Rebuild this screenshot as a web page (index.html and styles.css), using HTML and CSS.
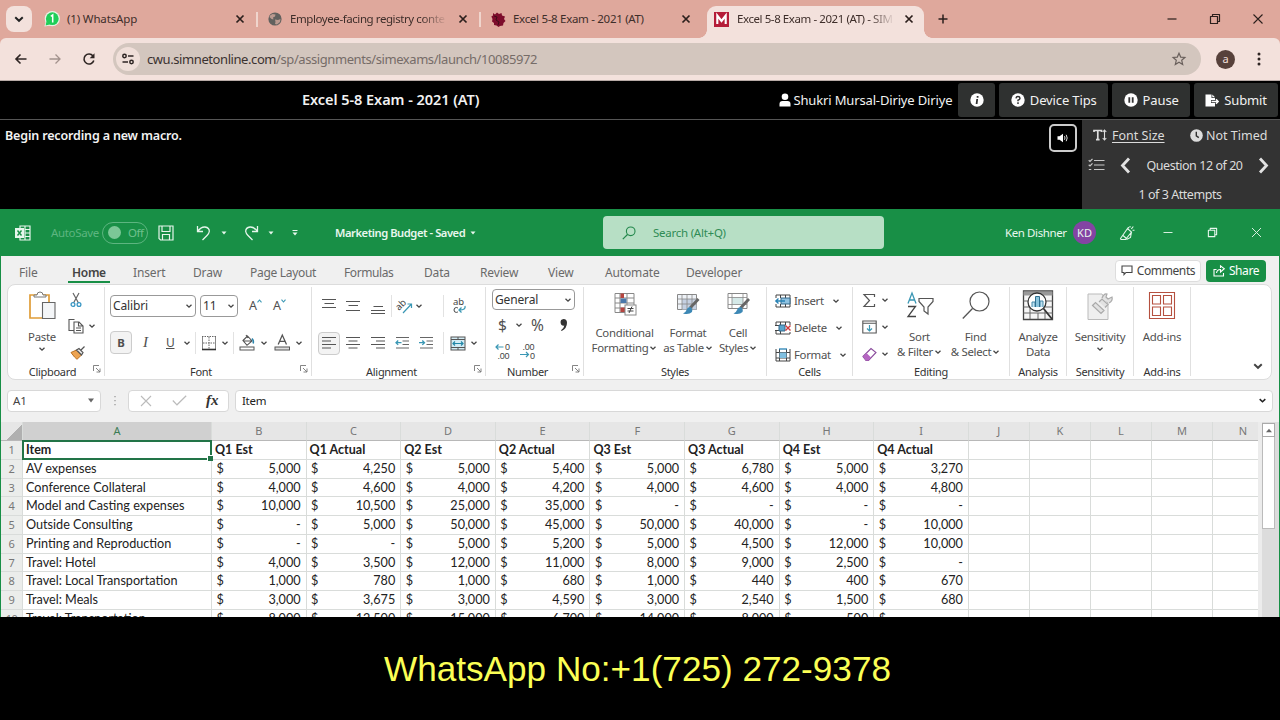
FILE: index.html
```html
<!DOCTYPE html>
<html lang="en">
<head>
<meta charset="utf-8">
<title>Excel 5-8 Exam - 2021 (AT)</title>
<link rel="stylesheet" href="styles.css">
</head>
<body>
<svg class="defs" width="0" height="0">
  <symbol id="chev" viewBox="0 0 8 8"><path d="M1.500 2.800 4 5.200 6.500 2.800" fill="none" stroke="currentColor" stroke-width="1.300"/></symbol>
  <symbol id="close" viewBox="0 0 10 10"><path d="M1.500 1.500l7 7m0-7l-7 7" fill="none" stroke="currentColor" stroke-width="1.700"/></symbol>
  <symbol id="launch" viewBox="0 0 8 8"><path d="M.5 6V.5H6M3 3l4 4M7 3.500V7H3.500" fill="none" stroke="currentColor" stroke-width=".9"/></symbol>
  <symbol id="restore" viewBox="0 0 12 12"><path d="M1.500 3.500h7v7h-7zM3.500 3.500v-2h7v7h-2" fill="none" stroke="currentColor" stroke-width="1.200" stroke-linejoin="round"/></symbol>
</svg>

<header class="tabs">
  <button class="tab-search"><svg width="12" height="12"><use href="#chev"/></svg></button>
  <div class="tab t1">
    <svg width="16" height="16" viewBox="0 0 16 16"><circle cx="8.300" cy="7.700" r="7.600" fill="#e9f3e6"/><path d="M.4 15.600 2 10.500l4 4z" fill="#e9f3e6"/><circle cx="8.300" cy="7.700" r="6.400" fill="#1fce58"/><path d="M1.600 14.400 2.600 10l3 3.400z" fill="#1fce58"/><path d="M6.800 5.300 8.700 4v7.500" fill="none" stroke="#fff" stroke-width="1.500"/></svg>
    <span>(1) WhatsApp</span><svg class="x" width="10" height="10"><use href="#close"/></svg>
  </div>
  <div class="tab t2">
    <svg width="14" height="14" viewBox="0 0 14 14"><circle cx="7" cy="7" r="6.600" fill="#62615e"/><path d="M2 3.500 4.500 2l3 .5-.5 2-2 1 .5 2-2-.5-2-2zM7 7.500l3 .5 2.500-1-.5 3-3 2.500-2-.5.5-2z" fill="#bb9a90"/></svg>
    <span class="fade">Employee-facing registry conte</span><svg class="x" width="10" height="10"><use href="#close"/></svg>
  </div>
  <div class="tab t3">
    <svg width="15" height="15" viewBox="0 0 15 15"><path d="M2 1l2 1.500L6 .5l2 1.500 2.500-1 .5 2.500 3 1-1 2.500 1.500 2-2 2-.5 2.500-3 .5-1.500 1-2-1.500-2.500-.5L3 11 1 9.500 1.500 7 .3 4.500 2 3.500z" fill="#7d0c2b"/><path d="M3 4l3 1-1 3 3 2-1 3" fill="none" stroke="#3e0d18"/></svg>
    <span>Excel 5-8 Exam - 2021 (AT)</span><svg class="x" width="10" height="10"><use href="#close"/></svg>
  </div>
  <div class="tab t4">
    <svg width="15" height="15" viewBox="0 0 15 15"><rect width="15" height="15" fill="#b51c38"/><path d="M3.300 12V3.500L7.500 9l4.200-5.500V12" fill="none" stroke="#fff" stroke-width="2.100"/></svg>
    <span class="fade">Excel 5-8 Exam - 2021 (AT) - SIM</span><svg class="x" width="10" height="10"><use href="#close"/></svg>
  </div>
  <svg class="plus" width="12" height="12" viewBox="0 0 12 12"><path d="M6 1.500v9M1.500 6h9" stroke="#2b1f1c" stroke-width="1.500"/></svg>
  <div class="win">
    <svg width="12" height="12" viewBox="0 0 12 12"><path d="M1.500 6h9" stroke="#2b1f1c" stroke-width="1.200"/></svg>
    <svg width="12" height="12"><use href="#restore"/></svg>
    <svg width="12" height="12" viewBox="0 0 12 12"><path d="M1.500 1.500l9 9m0-9l-9 9" stroke="#2b1f1c" stroke-width="1.100"/></svg>
  </div>
</header>

<nav class="toolbar">
  <div class="navs">
    <svg width="14" height="12" viewBox="0 0 14 12"><path d="M12.500 6H2M6.500 1.500 2 6l4.500 4.500" fill="none" stroke="#2e2523" stroke-width="1.600"/></svg>
    <svg width="14" height="12" viewBox="0 0 14 12"><path d="M1.500 6H12M7.500 1.500 12 6l-4.500 4.500" fill="none" stroke="#a3928d" stroke-width="1.300"/></svg>
    <svg width="14" height="14" viewBox="0 0 14 14"><path d="M11.800 8.500A5 5 0 1 1 11 4" fill="none" stroke="#2e2523" stroke-width="1.600"/><path d="M12.500 1.200v5H7.700z" fill="#2e2523"/></svg>
  </div>
  <div class="omni">
    <span class="site"><svg width="14" height="12" viewBox="0 0 14 12"><g fill="none" stroke="#2e2523" stroke-width="1.500"><circle cx="3.500" cy="3" r="1.700"/><path d="M7 3h5.500M1.500 9H7"/><circle cx="10.500" cy="9" r="1.700"/></g></svg></span>
    <span class="url">cwu.simnetonline.com<i>/sp/assignments/simexams/launch/10085972</i></span>
    <svg class="star" width="14" height="14" viewBox="0 0 14 14"><path d="M7 1.200l1.700 3.900 4.200.4-3.200 2.800 1 4.200L7 10.300l-3.700 2.200 1-4.200L1.100 5.500l4.200-.4z" fill="none" stroke="#6a605c" stroke-width="1.200"/></svg>
  </div>
  <span class="avatar">a</span>
  <svg width="4" height="16" viewBox="0 0 4 16"><g fill="#2e2523"><circle cx="2" cy="3" r="1.500"/><circle cx="2" cy="8" r="1.500"/><circle cx="2" cy="13" r="1.500"/></g></svg>
</nav>

<section class="exam">
  <h1>Excel 5-8 Exam - 2021 (AT)</h1>
  <div class="user"><svg width="12" height="14" viewBox="0 0 12 14"><circle cx="6" cy="3.800" r="3.300" fill="#fff"/><path d="M.5 13.500V11q0-3 3-3h5q3 0 3 3v2.500z" fill="#fff"/></svg>Shukri Mursal-Diriye Diriye</div>
  <button class="eb e1"><svg width="14" height="14" viewBox="0 0 14 14"><circle cx="7" cy="7" r="6.700" fill="#fff"/><path d="M7.600 3v1.700M7.200 6l-.6 5" stroke="#333" stroke-width="1.800"/></svg></button>
  <button class="eb e2"><svg width="14" height="14" viewBox="0 0 14 14"><circle cx="7" cy="7" r="6.700" fill="#fff"/><path d="M5 5.300Q5.200 3.600 7 3.600T9 5.300Q9 6.500 7 7.300v.9M7 9.300V11" fill="none" stroke="#333" stroke-width="1.500"/></svg>Device Tips</button>
  <button class="eb e3"><svg width="14" height="14" viewBox="0 0 14 14"><circle cx="7" cy="7" r="6.700" fill="#fff"/><path d="M5.300 4.200v5.600M8.700 4.200v5.600" stroke="#333" stroke-width="1.800"/></svg>Pause</button>
  <button class="eb e4"><svg width="14" height="13" viewBox="0 0 14 13"><path d="M.5.500h6v3.500h3.500v2H6v3h4v3.500H.5zM7.300.5l2.700 2.700H7.300z" fill="#fff"/><path d="M6.500 7.500H13M11 5.200l2.200 2.300L11 9.800" fill="none" stroke="#fff" stroke-width="1.400"/></svg>Submit</button>
</section>

<section class="question">
  <p>Begin recording a new macro.</p>
  <button class="sound"><svg width="12" height="10" viewBox="0 0 12 10"><path d="M.5 3.300h2L6 .8v8.400L2.500 6.700h-2z" fill="#fff"/><path d="M7.500 3.200q1 1.800 0 3.600M9.200 1.800q2 3.200 0 6.400" fill="none" stroke="#ddd"/></svg></button>
  <aside>
    <div class="q1">
      <svg width="14" height="12" viewBox="0 0 14 12"><path d="M1 3V1.500h7.500V3M4.800 1.500v9M3 10.600h3.600" fill="none" stroke="#ddd" stroke-width="1.700"/><path d="M11.500 1v10M9.700 3l1.800-2 1.800 2M9.700 9l1.800 2 1.800-2" fill="none" stroke="#ddd" stroke-width="1.100"/></svg>
      <u>Font Size</u>
      <svg class="clock" width="13" height="13" viewBox="0 0 13 13"><circle cx="6.500" cy="6.500" r="6.300" fill="#ddd"/><path d="M6.300 2.800v4l2.500 1.800" fill="none" stroke="#333" stroke-width="1.400"/></svg>
      <span>Not Timed</span>
    </div>
    <div class="q2">
      <svg width="17" height="14" viewBox="0 0 17 14"><path d="M6 2.500h10.500M6 7h10.500M6 11.500h10.500M.7 2.300l1.300 1.200L4.500.8M.7 6.800 2 8l2.500-2.700M.8 11.500h2.500" fill="none" stroke="#c9c9c9" stroke-width="1.200"/></svg>
      <svg width="11" height="17" viewBox="0 0 11 17"><path d="M9 1.500 2.500 8.500 9 15.500" fill="none" stroke="#e2e2e2" stroke-width="2.800"/></svg>
      <span>Question 12 of 20</span>
      <svg width="11" height="17" viewBox="0 0 11 17"><path d="M2 1.500 8.500 8.500 2 15.500" fill="none" stroke="#e2e2e2" stroke-width="2.800"/></svg>
    </div>
    <div class="q3">1 of 3 Attempts</div>
  </aside>
</section>

<main class="excel">
  <div class="title">
    <svg width="16" height="16" viewBox="0 0 16 16"><path d="M5 3V1h10v14H5v-2M10 1v14M10 4.500h5M10 8h5M10 11.500h5" fill="none" stroke="#e6f6ec" stroke-width="1.200"/><rect x="0" y="3" width="9" height="10" fill="#e6f6ec"/><path d="M2.500 5.500l4 5m0-5l-4 5" stroke="#188f46" stroke-width="1.400"/></svg>
    <span class="auto">AutoSave</span>
    <span class="toggle"><i></i>Off</span>
    <svg width="16" height="16" viewBox="0 0 16 16"><path d="M1 1h14v14H2.500L1 13.500zM4 1v5.500h8V1M4.500 15v-5.500h7V15" fill="none" stroke="#e6f6ec" stroke-width="1.200"/></svg>
    <svg width="15" height="16" viewBox="0 0 15 16"><path d="M1.500 1v5.500H7M1.500 6.500Q5 1.700 9 2q4.500.6 4.300 4.500Q13 8.500 11 10.500L6.500 15" fill="none" stroke="#e6f6ec" stroke-width="1.300"/></svg>
    <svg width="6" height="4" viewBox="0 0 6 4"><path d="M.5.500h5L3 3.500z" fill="#e6f6ec"/></svg>
    <svg width="15" height="16" viewBox="0 0 15 16"><path d="M13.500 1v5.500H8M13.500 6.500Q10 1.700 6 2 1.500 2.600 1.700 6.500 2 8.500 4 10.500L8.500 15" fill="none" stroke="#e6f6ec" stroke-width="1.300"/></svg>
    <svg width="6" height="4" viewBox="0 0 6 4"><path d="M.5.500h5L3 3.500z" fill="#e6f6ec"/></svg>
    <svg width="6" height="6" viewBox="0 0 6 6"><path d="M.5 2.500h5L3 5.500zM.5 0h5v1h-5z" fill="#e6f6ec"/></svg>
    <b class="doc">Marketing Budget - Saved</b>
    <svg width="6" height="4" viewBox="0 0 6 4"><path d="M.5.500h5L3 3.500z" fill="#e6f6ec"/></svg>
    <div class="search"><svg width="14" height="14" viewBox="0 0 14 14"><circle cx="8.700" cy="5.300" r="4.300" fill="none" stroke="#22874b" stroke-width="1.100"/><path d="M5.500 8.500.8 13.200" stroke="#22874b" stroke-width="1.200"/></svg>Search (Alt+Q)</div>
    <span class="ken">Ken Dishner</span>
    <span class="kd">KD</span>
    <svg width="16" height="16" viewBox="0 0 16 16"><path d="M1.500 13.500 8.500 3.500l4 3.500-6 7.500H2zM4 10.500l3.500 3M8.500 3.500 10 2.300M12.500 7l-1 5.500-4 2M11 1v1.500M12.300 4l2-2.500M13.500 5.300h2" fill="none" stroke="#e6f6ec" stroke-width="1.100"/></svg>
    <svg width="10" height="10" viewBox="0 0 10 10"><path d="M.5 4.500h9" stroke="#d6efdf"/></svg>
    <svg class="wr" width="11" height="11"><use href="#restore"/></svg>
    <svg width="11" height="11" viewBox="0 0 11 11"><path d="M1 1l9 9m0-9l-9 9" stroke="#d6efdf"/></svg>
  </div>

  <div class="menu">
    <span>File</span><span class="on">Home</span><span>Insert</span><span>Draw</span><span>Page Layout</span><span>Formulas</span><span>Data</span><span>Review</span><span>View</span><span>Automate</span><span>Developer</span>
    <button class="cm"><svg width="12" height="11" viewBox="0 0 12 11"><path d="M1 1h10v6.500H5L3 9.700V7.500H1z" fill="none" stroke="#444" stroke-width="1.100"/></svg>Comments</button>
    <button class="sh"><svg width="12" height="12" viewBox="0 0 12 12"><path d="M3.500 4.500H1v6.500h9.500V8M3.500 8q.5-3.500 4-3.500V7L11.300 3.700 7.500.8V3" fill="none" stroke="#fff" stroke-width="1.100"/></svg>Share</button>
  </div>

  <div class="ribbon">
    <section class="g clip">
      <div class="body">
        <div class="big">
          <svg width="28" height="30" viewBox="0 0 28 30"><path d="M9 4H2v23h12M14 4h7v7" fill="none" stroke="#e09d38" stroke-width="1.700"/><path d="M6 6V4h3q0-3 3-3t3 3h3v2z" fill="#fff" stroke="#777"/><path d="M14.500 11.500H27v16H14.500z" fill="#f4f6f8" stroke="#666" stroke-width="1.100"/></svg>
          <span>Paste</span><svg class="ch"><use href="#chev"/></svg>
        </div>
        <div class="col3">
          <div><svg width="12" height="16" viewBox="0 0 12 16"><path d="M3 1l5.500 10M9 1 3.500 11" stroke="#666" stroke-width="1.200"/><circle cx="3" cy="12.500" r="1.900" fill="none" stroke="#3a97c4" stroke-width="1.300"/><circle cx="9" cy="12.500" r="1.900" fill="none" stroke="#3a97c4" stroke-width="1.300"/></svg></div>
          <div><svg width="16" height="16" viewBox="0 0 16 16"><path d="M6 12.500H1V1.500h5.500M6 4h5l4 4v7H6zM10.500 4.500V8H15M8 10h5M8 12.500h5" fill="none" stroke="#555" stroke-width="1.100"/></svg><svg class="ch"><use href="#chev"/></svg></div>
          <div><svg width="16" height="15" viewBox="0 0 16 15"><path d="M1 7.500 6.500 5l5 5L7 14.300 4.500 12z" fill="#eda452" stroke="#bb7222"/><path d="M6.500 5 9 3.500l4 4-1.500 2.500zM11 5l3.500-3.500" fill="#eee" stroke="#555" stroke-width="1.200"/></svg></div>
        </div>
      </div>
      <footer>Clipboard<svg><use href="#launch"/></svg></footer>
    </section>

    <section class="g font">
      <div class="body rows">
        <div class="r r1"><span class="sel w1">Calibri<svg class="ch"><use href="#chev"/></svg></span><span class="sel w2">11<svg class="ch"><use href="#chev"/></svg></span><span class="aa">A<svg width="5" height="4" viewBox="0 0 5 4"><path d="M.5 3.300 2.500 1l2 2.300" fill="none" stroke="#3a97b4" stroke-width="1.100"/></svg></span><span class="aa">A<svg width="5" height="4" viewBox="0 0 5 4"><path d="M.5.700 2.500 3l2-2.300" fill="none" stroke="#3a97b4" stroke-width="1.100"/></svg></span></div>
        <div class="r r2"><b class="box">B</b><em>I</em><u>U</u><svg class="ch"><use href="#chev"/></svg><hr>
          <svg width="16" height="16" viewBox="0 0 16 16"><path d="M1.500 1v13.500M14.500 1v13.500" stroke="#888" stroke-width="1"/><path d="M1 1.500h14M8 2v12M2 8h12" stroke="#666" stroke-dasharray="1.500 1"/><path d="M1 14.500h14" stroke="#333" stroke-width="1.600"/></svg><svg class="ch"><use href="#chev"/></svg><hr>
          <svg width="17" height="17" viewBox="0 0 17 17"><path d="M4 6.500 8.500 2l4.500 5-5 4.300zM7 1l2 3M4.500 7h8" fill="none" stroke="#555" stroke-width="1.100"/><path d="M13 4.500q2 2 1.200 5" fill="none" stroke="#2d86ad" stroke-width="1.500"/><rect x="1" y="13" width="14" height="3" fill="#fff" stroke="#555"/></svg><svg class="ch"><use href="#chev"/></svg>
          <svg width="17" height="17" viewBox="0 0 17 17"><path d="M4.200 10.500 8.300 1l4.200 9.500M5.700 7.300h5.300" fill="none" stroke="#555" stroke-width="1.300"/><rect x="1" y="13" width="14.500" height="3" fill="#ddd" stroke="#555"/></svg><svg class="ch"><use href="#chev"/></svg></div>
      </div>
      <footer>Font<svg><use href="#launch"/></svg></footer>
    </section>

    <section class="g align">
      <div class="body rows">
        <div class="r a1">
          <svg width="20" height="20" viewBox="0 0 20 20"><path d="M4 3.500h14M6.500 7.500H16M4 11.500h14" stroke="#555" stroke-width="1.200"/></svg>
          <svg width="14" height="20" viewBox="0 0 14 20"><path d="M0 5.500h14M2.500 9.500H12M0 14.500h14" stroke="#555" stroke-width="1.200"/></svg>
          <svg width="14" height="20" viewBox="0 0 14 20"><path d="M2.500 10.500H12M0 14.500h14M0 17.500h14" stroke="#555" stroke-width="1.200"/></svg><hr>
          <svg width="16" height="16" viewBox="0 0 16 16"><text x="-1" y="10" transform="rotate(-45 4 8)" class="gt">ab</text><path d="M6 15 14.500 6M10.500 6h4v4" fill="none" stroke="#3a97b4" stroke-width="1.200"/></svg><svg class="ch"><use href="#chev"/></svg><hr>
          <svg width="15" height="18" viewBox="0 0 15 18"><text x="1" y="8" class="gt">ab</text><path d="M6 11.200Q5.300 10.500 4.300 10.500 2 10.600 2 13t2.300 2.400q1 0 1.700-.7" fill="none" stroke="#444" stroke-width="1"/><path d="M13 9q1 4-5.500 4M9.500 10.500 7 13l2.500 2.500" fill="none" stroke="#3a97b4" stroke-width="1.300"/></svg>
        </div>
        <div class="r a2">
          <span class="box"><svg width="14" height="14" viewBox="0 0 14 14"><path d="M0 1.500h14M0 5h9M0 8.500h14M0 12h9" stroke="#555" stroke-width="1.200"/></svg></span>
          <svg width="14" height="14" viewBox="0 0 14 14"><path d="M0 1.500h14M2.500 5h9M0 8.500h14M2.500 12h9" stroke="#555" stroke-width="1.200"/></svg>
          <svg width="14" height="14" viewBox="0 0 14 14"><path d="M0 1.500h14M5 5h9M0 8.500h14M5 12h9" stroke="#555" stroke-width="1.200"/></svg>
          <svg width="14" height="14" viewBox="0 0 14 14"><path d="M1 1.500h13M7.500 5H14M7.500 8.500H14M1 12h13" stroke="#666" stroke-width="1.100"/><path d="M6.500 6.700H1M3.200 4.500 1 6.700l2.200 2.200" fill="none" stroke="#3a97b4" stroke-width="1.300"/></svg>
          <svg width="14" height="14" viewBox="0 0 14 14"><path d="M1 1.500h13M7.500 5H14M7.500 8.500H14M1 12h13" stroke="#666" stroke-width="1.100"/><path d="M0 6.700h5.500M3.300 4.500l2.200 2.200-2.200 2.200" fill="none" stroke="#3a97b4" stroke-width="1.300"/></svg><hr>
          <svg width="16" height="15" viewBox="0 0 16 15"><rect x="1" y="1" width="14" height="13" fill="#d3ecf5" stroke="#555"/><path d="M1 3.500h14M1 11.500h14M8 1v2.500M8 11.500V14" stroke="#555"/><path d="M3 7.500h10M5 5.500l-2 2 2 2M11 5.500l2 2-2 2" fill="none" stroke="#2388a8" stroke-width="1.200"/></svg><svg class="ch"><use href="#chev"/></svg>
        </div>
      </div>
      <footer>Alignment<svg><use href="#launch"/></svg></footer>
    </section>

    <section class="g num">
      <div class="body rows">
        <span class="sel w3">General<svg class="ch"><use href="#chev"/></svg></span>
        <div class="r n1"><span class="big-ch">$</span><svg class="ch"><use href="#chev"/></svg><span class="big-ch">%</span><svg width="9" height="14" viewBox="0 0 9 14"><path d="M4.500 1a3.300 3.300 0 1 0 .8 6.600Q5 10.500 2 12.300l.7.700Q8 10.500 8 4.800 8 1.200 4.500 1z" fill="#333"/></svg></div>
        <div class="r n2">
          <svg width="16" height="16" viewBox="0 0 16 16"><text x="10" y="7" class="gd">0</text><text x="2.500" y="15.500" class="gd">.00</text><path d="M8.500 4H1M3.500 1.500 1 4l2.500 2.500" fill="none" stroke="#3a97b4" stroke-width="1.200"/></svg>
          <svg width="16" height="16" viewBox="0 0 16 16"><text x="2.500" y="7" class="gd">.00</text><text x="10" y="15.500" class="gd">0</text><path d="M0 11.500h8.500M6 9l2.500 2.500L6 14" fill="none" stroke="#3a97b4" stroke-width="1.200"/></svg>
        </div>
      </div>
      <footer>Number<svg><use href="#launch"/></svg></footer>
    </section>

    <section class="g sty">
      <div class="body">
        <div class="big hi"><svg width="24" height="24" viewBox="0 0 24 24"><path d="M2 1.500h19v19H2zM7 1.500v19M14 1.500v19M2 6h19M2 11h19M2 16h19" fill="none" stroke="#888"/><path d="M7.500 1.500H11V6H7.500zM7.500 15.500H12V20H7.500z" fill="#b5443f"/><path d="M7.500 6.500h6V11h-6z" fill="#4b78aa"/><rect x="12" y="13" width="11" height="10" fill="#fff" stroke="#888"/><path d="M14.500 16.500h6M14.500 19h6M19 14.500 16 21" stroke="#444"/></svg><span>Conditional</span><span>Formatting<svg class="ch"><use href="#chev"/></svg></span></div>
        <div class="big hi"><svg width="24" height="24" viewBox="0 0 24 24"><path d="M1.500 2.500h19v15h-19z" fill="#eef2f7" stroke="#888"/><path d="M6 7h14.500v10.500H6z" fill="#c5d0e2"/><path d="M1.500 7h19M1.500 12h19M6 2.500v15M11 2.500v15M16 2.500v15" stroke="#888" stroke-width=".8"/><path d="M22.500 7 14 16" stroke="#666" stroke-width="2.800"/><path d="M14.500 15q-3 0-4 3T7 21.500q6 1.500 9-1.500 1-3-1.500-5z" fill="#3d88b5"/></svg><span>Format</span><span>as Table<svg class="ch"><use href="#chev"/></svg></span></div>
        <div class="big hi"><svg width="24" height="24" viewBox="0 0 24 24"><path d="M2 1.500h19v15H2z" fill="#fff" stroke="#888"/><path d="M6 5.500h11v7H6z" fill="#d5e9e8"/><path d="M2 5.500h19M2 12.500h19M6 1.500v15M17 1.500v15" stroke="#888" stroke-width=".8"/><path d="M23 7 14.500 16" stroke="#666" stroke-width="2.800"/><path d="M15 15q-3 0-4 3t-3.500 3.500q6 1.500 9-1.500 1-3-1.500-5z" fill="#3d88b5"/></svg><span>Cell</span><span>Styles<svg class="ch"><use href="#chev"/></svg></span></div>
      </div>
      <footer>Styles</footer>
    </section>

    <section class="g cells">
      <div class="body col3">
        <div><svg width="16" height="14" viewBox="0 0 16 14"><path d="M1 4V1h14v12H1v-3M5.500 1v3M10.500 1v3M5.500 10v3M10.500 10v3" fill="none" stroke="#444"/><path d="M6 4h9v6H6z" fill="#8fc3e2" stroke="#35688a"/><path d="M10 7H.8M3.500 4.500.8 7l2.700 2.500" fill="none" stroke="#2782b5" stroke-width="1.300"/></svg><span>Insert</span><svg class="ch"><use href="#chev"/></svg></div>
        <div><svg width="16" height="14" viewBox="0 0 16 14"><path d="M1 4V1h14v3M1 10v3h14v-2M5.500 1v3M10.500 1v3M5.500 10v3M0 4.500h4M0 9.500h4" fill="none" stroke="#444"/><path d="M4 4h6v6H4z" fill="#5ba5cd" stroke="#35688a"/><path d="M10.500 4.500l5 5m0-5l-5 5" stroke="#d0393c" stroke-width="1.400"/></svg><span>Delete</span><svg class="ch"><use href="#chev"/></svg></div>
        <div><svg width="16" height="14" viewBox="0 0 16 14"><path d="M1 1v12h14V1M1 4.500h14M1 10h14M4.500 1v12M11.500 1v12" fill="none" stroke="#444"/><path d="M4.500 4.500h7V10h-7z" fill="#7fbfe0"/><path d="M4 1h8" stroke="#2782b5" stroke-width="1.300"/></svg><span>Format</span><svg class="ch"><use href="#chev"/></svg></div>
      </div>
      <footer>Cells</footer>
    </section>

    <section class="g edit">
      <div class="body">
        <div class="col3">
          <div><svg width="15" height="15" viewBox="0 0 15 15"><path d="M12.500 4V1.500H2L7.500 7.500 2 13.500h10.500V11" fill="none" stroke="#555" stroke-width="1.200"/></svg><svg class="ch"><use href="#chev"/></svg></div>
          <div><svg width="15" height="14" viewBox="0 0 15 14"><path d="M.8 1h13.400v12H.8zM.8 3.200h13.400" fill="none" stroke="#555" stroke-width="1.100"/><path d="M7.500 5v6M5 8.500 7.500 11 10 8.500" fill="none" stroke="#3a97b4" stroke-width="1.200"/></svg><svg class="ch"><use href="#chev"/></svg></div>
          <div><svg width="15" height="14" viewBox="0 0 15 14"><path d="M1 9.500 9 1.500l5 4-7.500 8H4z" fill="#fff" stroke="#8a4c9c" stroke-width="1.100"/><path d="M1 9.500l3.500-3.500L9 10.500l-2.500 3H4z" fill="#b565c2"/></svg><svg class="ch"><use href="#chev"/></svg></div>
        </div>
        <div class="big"><svg width="28" height="30" viewBox="0 0 28 30"><path d="M2 12.500 6 2l4 10.500M3.300 9h5.400" fill="none" stroke="#3a97b4" stroke-width="1.300"/><path d="M2 15.500h7.500L2 25.500h8" fill="none" stroke="#444" stroke-width="1.300"/><path d="M13 7.500h14v3l-5 5.500v7l-4-3v-4l-5-5.500z" fill="none" stroke="#555" stroke-width="1.200"/></svg><span>Sort</span><span>&amp; Filter<svg class="ch"><use href="#chev"/></svg></span></div>
        <div class="big"><svg width="28" height="30" viewBox="0 0 28 30"><circle cx="17.500" cy="10.500" r="9.500" fill="none" stroke="#555" stroke-width="1.200"/><path d="M10.500 17.500.8 27.500" stroke="#555" stroke-width="1.300"/></svg><span>Find</span><span>&amp; Select<svg class="ch"><use href="#chev"/></svg></span></div>
      </div>
      <footer>Editing</footer>
    </section>

    <section class="g ana">
      <div class="body"><div class="big"><svg width="32" height="32" viewBox="0 0 32 32"><path d="M1.500 2h29v28.500h-29z" fill="#f6f6f6" stroke="#444" stroke-width="1.300"/><path d="M1.500 4.500h29" stroke="#999" stroke-width="4"/><path d="M1.500 12h29M1.500 18h29M1.500 24h29M8 18v12M16 24v6M23 22v8" stroke="#666"/><circle cx="15" cy="13" r="9" fill="#fff" stroke="#333" stroke-width="1.300"/><path d="M10 18v-5h3v5M18 18v-6h3v6" fill="#bfe1f0" stroke="#4588a8"/><path d="M13.500 18V7.500h4V18" fill="#8cc5dd" stroke="#2f6f90"/><path d="M21.500 19.500 30 30" stroke="#333" stroke-width="1.800"/></svg><span>Analyze</span><span>Data</span></div></div>
      <footer>Analysis</footer>
    </section>
    <section class="g sen">
      <div class="body"><div class="big"><svg width="28" height="30" viewBox="0 0 28 30"><path d="M2 3h14l6 9v16.500H2z" fill="#efefef" stroke="#bbb"/><path d="M6.500 14.500 9.500 11.500 18 19.500 15 22.500zM13 11l3-3 6 5.500-3 3M16 7q2-5 5-4l-1 3 2 2 4-2q1 4-3 6" fill="#e2e2e2" stroke="#aaa" stroke-width="1.200"/></svg><span>Sensitivity</span><svg class="ch"><use href="#chev"/></svg></div></div>
      <footer>Sensitivity</footer>
    </section>
    <section class="g add">
      <div class="body"><div class="big"><svg width="28" height="30" viewBox="0 0 28 30"><path d="M1.500 1.500h25v26h-25zM4.500 4.500h8v8.500h-8zM15.500 4.500h8v8.500h-8zM4.500 16h8v8.500h-8zM15.500 16h8v8.500h-8z" fill="none" stroke="#b5503f" stroke-width="1.100"/></svg><span>Add-ins</span></div></div>
      <footer>Add-ins</footer>
    </section>
    <svg class="more" width="12" height="12"><use href="#chev"/></svg>
  </div>

  <div class="fbar">
    <span class="name">A1<svg width="8" height="5" viewBox="0 0 8 5"><path d="M1 .5h6L4 4.500z" fill="#666"/></svg></span>
    <svg width="4" height="12" viewBox="0 0 4 12"><path d="M2 1v10" stroke="#999" stroke-width="1.300" stroke-dasharray="1.300 2.700"/></svg>
    <span class="fx"><svg width="12" height="12" viewBox="0 0 12 12"><path d="M1 1l10 10m0-10L1 11" stroke="#bbb" stroke-width="1.100"/></svg><svg width="15" height="11" viewBox="0 0 15 11"><path d="M.8 5.500 5 9.800 14.200.8" fill="none" stroke="#bbb" stroke-width="1.200"/></svg><i>fx</i></span>
    <span class="val">Item<svg width="9" height="9"><use href="#chev"/></svg></span>
  </div>

  <div class="lower">
    <div class="sheet">
      <div class="row head"><span class="corner"></span><span class="cur">A</span><span>B</span><span>C</span><span>D</span><span>E</span><span>F</span><span>G</span><span>H</span><span>I</span><span>J</span><span>K</span><span>L</span><span>M</span><span>N</span></div>
      <div class="row first"><span>1</span><b class="active">Item</b><b>Q1 Est</b><b>Q1 Actual</b><b>Q2 Est</b><b>Q2 Actual</b><b>Q3 Est</b><b>Q3 Actual</b><b>Q4 Est</b><b>Q4 Actual</b><span class="rest"></span></div>
      <div class="row"><span>2</span><p>AV expenses</p><p><i>$</i>5,000</p><p><i>$</i>4,250</p><p><i>$</i>5,000</p><p><i>$</i>5,400</p><p><i>$</i>5,000</p><p><i>$</i>6,780</p><p><i>$</i>5,000</p><p><i>$</i>3,270</p><span class="rest"></span></div>
      <div class="row"><span>3</span><p>Conference Collateral</p><p><i>$</i>4,000</p><p><i>$</i>4,600</p><p><i>$</i>4,000</p><p><i>$</i>4,200</p><p><i>$</i>4,000</p><p><i>$</i>4,600</p><p><i>$</i>4,000</p><p><i>$</i>4,800</p><span class="rest"></span></div>
      <div class="row"><span>4</span><p>Model and Casting expenses</p><p><i>$</i>10,000</p><p><i>$</i>10,500</p><p><i>$</i>25,000</p><p><i>$</i>35,000</p><p><i>$</i>-</p><p><i>$</i>-</p><p><i>$</i>-</p><p><i>$</i>-</p><span class="rest"></span></div>
      <div class="row"><span>5</span><p>Outside Consulting</p><p><i>$</i>-</p><p><i>$</i>5,000</p><p><i>$</i>50,000</p><p><i>$</i>45,000</p><p><i>$</i>50,000</p><p><i>$</i>40,000</p><p><i>$</i>-</p><p><i>$</i>10,000</p><span class="rest"></span></div>
      <div class="row"><span>6</span><p>Printing and Reproduction</p><p><i>$</i>-</p><p><i>$</i>-</p><p><i>$</i>5,000</p><p><i>$</i>5,200</p><p><i>$</i>5,000</p><p><i>$</i>4,500</p><p><i>$</i>12,000</p><p><i>$</i>10,000</p><span class="rest"></span></div>
      <div class="row"><span>7</span><p>Travel: Hotel</p><p><i>$</i>4,000</p><p><i>$</i>3,500</p><p><i>$</i>12,000</p><p><i>$</i>11,000</p><p><i>$</i>8,000</p><p><i>$</i>9,000</p><p><i>$</i>2,500</p><p><i>$</i>-</p><span class="rest"></span></div>
      <div class="row"><span>8</span><p>Travel: Local Transportation</p><p><i>$</i>1,000</p><p><i>$</i>780</p><p><i>$</i>1,000</p><p><i>$</i>680</p><p><i>$</i>1,000</p><p><i>$</i>440</p><p><i>$</i>400</p><p><i>$</i>670</p><span class="rest"></span></div>
      <div class="row"><span>9</span><p>Travel: Meals</p><p><i>$</i>3,000</p><p><i>$</i>3,675</p><p><i>$</i>3,000</p><p><i>$</i>4,590</p><p><i>$</i>3,000</p><p><i>$</i>2,540</p><p><i>$</i>1,500</p><p><i>$</i>680</p><span class="rest"></span></div>
      <div class="row"><span>10</span><p>Travel: Transportation</p><p><i>$</i>8,000</p><p><i>$</i>12,500</p><p><i>$</i>15,000</p><p><i>$</i>6,700</p><p><i>$</i>14,000</p><p><i>$</i>8,000</p><p><i>$</i>500</p><p><i>$</i></p><span class="rest"></span></div>
    </div>
    <div class="scroll"><span class="up"><svg width="8" height="5" viewBox="0 0 8 5"><path d="M1 4.300h6L4 .8z" fill="#666"/></svg></span><span class="thumb"></span></div>
  </div>
</main>
<div class="caption">WhatsApp No:+1(725) 272-9378</div>
</body>
</html>
```
FILE: styles.css
```css
*{box-sizing:border-box}
body{margin:0;width:1280px;height:720px;overflow:hidden;background:#000;font-family:"Noto Sans","Open Sans",sans-serif;font-size:12px;color:#333;white-space:nowrap}
svg{display:block;flex:none;overflow:visible}
.defs{position:absolute}
button{border:0;padding:0;margin:0;font:inherit;color:inherit;display:flex;align-items:center}
p,h1{margin:0}
hr{margin:0;border:0;border-left:1px solid #e2e2e2;height:22px;width:0}

/* browser tabs */
.tabs{height:44px;padding-bottom:6px;margin-bottom:-6px;background:#dfa89c;display:flex;align-items:center;color:#3e2e2a;font-size:11.500px;letter-spacing:-.3px}
.tab-search{width:26px;height:26px;margin-left:6px;border-radius:8px;background:#f3e1dc;justify-content:center;color:#222}
.tab{display:flex;align-items:center;height:32px}
.tab .x{margin-left:auto;color:#2b1f1c}
.tab span{line-height:16px}
.tab .fade{overflow:hidden;letter-spacing:-.42px;-webkit-mask-image:linear-gradient(90deg,#000 84%,transparent 100%)}
.t1{margin-left:12px;width:201px}
.t1 span{margin-left:7px;letter-spacing:-.15px}
.t2{margin-left:12px;padding-left:11px;width:211px;position:relative}
.t2 span{margin-left:8px;width:157px}
.t2::before,.t3::before{content:"";position:absolute;left:-1px;top:9px;height:15px;width:2px;background:#f0d5cd}
.t3{margin-left:12px;padding-left:11px;width:211px;position:relative}
.t3 span{margin-left:7px}
.t4{margin-left:16px;padding:0 10px 6px 7px;width:217px;align-self:flex-end;background:#f3e1dc;border-radius:9px 9px 0 0;position:relative}
.t4 span{margin-left:8px;width:158px}
.t4::before,.t4::after{content:"";position:absolute;bottom:0;width:8px;height:8px;background:radial-gradient(circle at 0 0,transparent 7.500px,#f3e1dc 8px)}
.t4::before{left:-8px}
.t4::after{right:-8px;transform:scaleX(-1)}
.plus{margin-left:13px;margin-right:auto}
.win{display:flex;gap:31px;margin-right:16px;color:#2b1f1c}

/* address bar */
.toolbar{height:43px;background:#f3e1dc;display:flex;align-items:center;border-bottom:1px solid #b7aaa6;border-radius:6px 6px 0 0;position:relative}
.navs{display:flex;align-items:center;gap:20px;width:113px;padding-left:14px}
.omni{width:1088px;height:32px;border-radius:16px;background:#d3c6be;display:flex;align-items:center}
.site{margin-left:3px;width:24px;height:24px;border-radius:50%;background:#f0dfd9;display:flex;align-items:center;justify-content:center}
.url{margin-left:7px;font-size:13px;color:#3b3230;letter-spacing:-.42px}
.url i{font-style:normal;color:#766c68}
.star{margin-left:auto;margin-right:15px}
.avatar{width:19px;height:19px;border-radius:50%;background:#57413b;color:#f1dfd9;text-align:center;line-height:18px;font-size:11px;margin:0 22px 0 15px}

/* exam bar */
.exam{height:39px;border-bottom:1px solid #555;display:flex;align-items:center;color:#f2f2f2;font-size:13px;padding-right:2px;gap:4px}
.exam h1{font-size:14.500px;font-weight:600;margin:-2px 0 0 302px;width:473px;letter-spacing:-.05px}
.user{display:flex;align-items:center;gap:3px;width:176px;letter-spacing:-.15px}
.eb{height:34px;background:#2f3130;border-radius:3px;justify-content:center;gap:5px;letter-spacing:-.13px}
.e1{width:37px}.e2{width:109px}.e3{width:78px}.e4{width:84px}
.question{height:89px;display:flex;color:#f2f2f2}
.question p{padding:7px 0 0 5px;font-size:12.500px;font-weight:600;width:1049px;letter-spacing:-.16px}
.sound{width:28px;height:28px;margin-top:4px;border:2px solid #ccc;border-radius:5px;background:#000;justify-content:center}
aside{margin-left:auto;width:198px;background:#333;color:#dcdcdc;font-size:12.500px;letter-spacing:-.45px}
.q1,.q2,.q3{display:flex;align-items:center;height:30px}
.q1{padding-left:11px;letter-spacing:0}
.q1 u{margin-left:5px;text-underline-offset:2px}
.q1 .clock{margin-left:auto;margin-right:3px}
.q1 span{width:74px}
.q2{padding:0 11px 0 6px}
.q2 svg:nth-child(2){margin-left:15px}
.q2 span{margin:0 auto}
.q3{justify-content:center;padding-right:2px;height:28px}

/* workbook title bar */
.excel{height:408px;background:#f0f0f0;display:flex;flex-direction:column;border-right:1px solid #188f46;border-left:1px solid #188f46;overflow:hidden}
.title{height:47px;flex:none;background:#188f46;display:flex;align-items:center;color:#e8f7ee;padding-left:14px;font-size:11.500px}
.auto{margin-left:20px;width:51px;color:#5db580;letter-spacing:-.35px}
.toggle{width:46px;height:22px;border:1px solid #5db580;border-radius:11px;display:flex;align-items:center;color:#6fc08d;margin-right:10px;letter-spacing:-.5px}
.toggle i{width:13px;height:13px;border-radius:50%;background:#7cc797;margin:0 7px 0 5px}
.title>svg:nth-child(5){margin-left:22px}
.title>svg:nth-child(6){margin-left:10px}
.title>svg:nth-child(7){margin-left:17px}
.title>svg:nth-child(8){margin-left:9px}
.title>svg:nth-child(9){margin-left:18px}
.doc{margin-left:37px;width:132px;font-weight:600;font-size:11.200px;margin-right:3px;letter-spacing:-.45px}
.search{margin-left:127px;width:281px;height:33px;background:#b7dfc5;border-radius:4px;display:flex;align-items:center;padding-left:19px;gap:17px;color:#2f8c55;letter-spacing:-.25px}
.ken{margin-left:121px;width:60px;letter-spacing:-.4px}
.kd{width:23px;height:23px;margin-left:8px;border-radius:50%;background:#8344a3;text-align:center;line-height:23px;font-size:11px}
.kd+svg{margin-left:23px}
.kd+svg+svg{margin-left:28px}
.title>.wr{margin-left:34px;margin-right:33px}

/* ribbon tabs */
.menu{height:28px;flex:none;display:flex;align-items:center;color:#6a6a6a;font-size:12px;padding:3px 0 0 18px;letter-spacing:-.15px}
.menu span{height:21px;line-height:23px;width:60px;flex:none}
.menu span:nth-child(1){width:53px}
.menu .on{font-weight:600;color:#444;width:61px;letter-spacing:-.3px}
.menu .on::after{content:"";display:block;width:42px;height:2px;margin:-3px 0 0 -4px;background:#188f46}
.menu span:nth-child(4){width:57px}
.menu span:nth-child(5){width:94px;letter-spacing:-.3px}
.menu span:nth-child(6){width:80px;letter-spacing:-.4px}
.menu span:nth-child(7){width:56px}
.menu span:nth-child(8){width:68px}
.menu span:nth-child(9){width:57px}
.menu span:nth-child(10){width:81px}
.menu button{height:22px;border-radius:4px;justify-content:center;gap:4px;margin-top:-2px;letter-spacing:-.4px}
.cm{margin-left:auto;width:86px;background:#fff;border:1px solid #ddd;color:#444}
.sh{margin:0 13px 0 5px;width:60px;background:#188f46;color:#fff}

/* ribbon */
.ribbon{height:96px;flex:none;margin:0 7px 0 6px;background:#fff;border:1px solid #dcdcdc;border-radius:8px;display:flex;font-size:11.400px;color:#505050;letter-spacing:-.3px;padding-top:2px}
.g{border-right:1px solid #e0e0e0;height:89px;display:flex;flex-direction:column;flex:none}
.g .body{height:77px;display:flex;flex:none}
.g footer{height:12px;line-height:15px;text-align:center;font-size:11px;color:#333;position:relative}
.g footer svg{position:absolute;right:3px;top:1px;width:8px;height:8px;color:#777}
.ch{width:8px;height:8px;color:#444}
.clip{width:97px}.font{width:207px}.align{width:174px}.num{width:98px}.sty{width:183px}.cells{width:86px}.edit{width:157px}.ana{width:57px}.sen{width:67px}.add{width:57px}
.clip footer{padding-right:7px}.font footer{padding-right:14px}.align footer{padding-right:14px}.num footer{padding-right:14px}
.big{display:flex;flex-direction:column;align-items:center;padding-top:3px}
.big>svg:first-child{height:32px;margin-bottom:7px}
.big span{display:flex;align-items:center;line-height:15px}
.big.hi>svg:first-child{height:24px;margin:2px 0 9px}
.big span .ch{margin-left:1px}
.big>.ch{margin-top:1px}
.col3>div{display:flex;align-items:center;height:26px;gap:4px}
.clip .big{width:56px;margin-left:6px}
.clip .col3{width:30px;margin-left:-2px}
.clip .col3>div:nth-child(odd){padding-left:2px}
.clip .col3>div:nth-child(2){gap:4px}
.sel{height:22px;border:1px solid #999;border-radius:4px;display:flex;align-items:center;justify-content:space-between;padding:0 2px;color:#333;font-size:12px;letter-spacing:-.15px}
.w1{width:86px}.w2{width:38px}.w3{width:83px;margin:2px 0 0 6px}
.r{display:grid;align-items:center;justify-items:start;height:37px}
.rows{flex-direction:column}
.r1{grid-template-columns:90px 49px 24px auto;padding-left:5px}
.aa{display:flex;font-size:12.500px}
.aa svg{margin-top:2px}
.r2{grid-template-columns:29px 24px 20px 12px 6px 20px 12px 6px 21px 14px 21px auto;padding-left:5px}
.r em{font-family:"Liberation Serif",serif;font-size:15px;padding-left:4px}
.r u{font-size:12px;padding-left:3px}
.box{width:22px;height:23px;border:1px solid #ccc;border-radius:4px;background:#f3f3f3;display:flex;align-items:center;justify-content:center}
.a1{grid-template-columns:28px 25px 20px 6px 18px 28px 9px auto;padding-left:6px}
.a2{grid-template-columns:28px 25px 24px 24px 24px 7px 20px auto;padding-left:6px;height:38px}
.gt{font-size:9.500px;fill:#444;letter-spacing:0}
.gd{font:9px "Liberation Sans",sans-serif;fill:#444;letter-spacing:-.2px}
.n1{grid-template-columns:17px 16px 28px auto;padding-left:12px;height:30px}
.n2{grid-template-columns:25px auto;padding-left:9px;height:22px}
.big-ch{font-size:15.500px;line-height:18px}
.num .sel{height:21px;flex:none}
.sty .big:first-child{width:81px}
.sty .big:nth-child(2){width:46px}
.sty .big:nth-child(3){width:54px}
.cells .col3{display:flex;flex-direction:column;padding-left:8px}
.cells .col3>div{height:27.200px;gap:3px;flex:none}
.cells .ch{margin-left:5px}
.edit .col3{width:40px;padding-left:9px}
.edit .col3>div{height:26.700px}
.edit .big:nth-child(2){width:53px}
.edit .big:nth-child(3){width:59px}
.ana .big,.sen .big,.add .big{width:100%}
.ana .big>svg:first-child{margin-top:-1px;margin-bottom:8px}
.more{margin:73px 0 0 61px;color:#444}

/* formula bar */
.fbar{height:42px;flex:none;display:flex;align-items:center;padding:0 0 1px 6px;color:#444}
.fbar>span{height:22px;background:#fff;border:1px solid #d8d8d8;border-radius:4px;display:flex;align-items:center}
.fbar .name{width:94px;justify-content:space-between;padding:0 5px 0 5px;margin-right:12px;font-size:11.500px}
.fbar .fx{width:101px;margin:0 6px 0 11px;padding-left:11px;gap:20px}
.fx i{font:italic bold 15px "Liberation Serif",serif;margin-left:-1px;color:#333}
.val{width:1038px;justify-content:space-between;padding:0 5px 0 6px;font-size:11.500px;color:#222;letter-spacing:-.3px}

/* sheet */
.lower{display:flex;height:195px;flex:none}
.sheet{width:1257px;overflow:hidden}
.row{display:grid;grid-template-columns:22px 189px repeat(8,94.620px) 1fr;height:18.750px;font:12.650px/18.750px Lato,sans-serif;color:#222;background:#fff}
.row>*{border-right:1px solid #d9dcda;border-bottom:1px solid #d9dcda;min-width:0;overflow:hidden}
.row>span:first-child{background:#ebedeb;color:#777;text-align:center;font:11px/18px "Noto Sans",sans-serif;letter-spacing:-.5px}
.row p{padding-right:5px;display:flex;justify-content:space-between}
.row p:nth-child(2){padding-left:3px}
.row p i{font-style:normal;padding-left:4.500px}
.row b{padding-left:3px;font-size:12.500px}
.row>.rest{border-right:0;background:repeating-linear-gradient(90deg,transparent 0 60px,#d9dcda 60px 61px)}
.head{grid-template-columns:22px 189px repeat(8,94.620px) 61px 61px 61px 61px 1fr;height:19px}
.head>span{background:#e6e6e6;border-bottom:1px solid #b8b8b8;text-align:center;color:#777;font:11px/18px "Noto Sans",sans-serif}
.head>.cur{background:#d0d0d0;color:#3b7c54}
.head>span:last-child{padding-left:15px;border-right:0}
.head>.corner:first-child{background:linear-gradient(135deg,#e6e6e6 60%,#b0b0b0 61%)}
.row>.active{border:2px solid #227447;margin:-1px 0 0 -1px;padding-left:2px;line-height:16px;position:relative;overflow:visible}
.active::after{content:"";position:absolute;right:-3px;bottom:-3px;width:5px;height:5px;background:#227447;border-top:1px solid #fff;border-left:1px solid #fff}
.scroll{width:21px;background:#dcdcdc;padding:1px 3px 0 4px;border-left:4px solid #ececec}
.up{display:flex;align-items:center;justify-content:center;height:14px;width:13px;background:#fff;border:1px solid #aaa;margin-left:-4px}
.thumb{display:block;height:92px;width:13px;background:#fff;border:1px solid #bbb;border-top:0;margin-left:-4px}

.caption{height:103px;line-height:103px;text-align:center;color:#fbff55;font-family:"Liberation Sans",Arial,sans-serif;font-size:35.150px;padding-right:5px}
```
